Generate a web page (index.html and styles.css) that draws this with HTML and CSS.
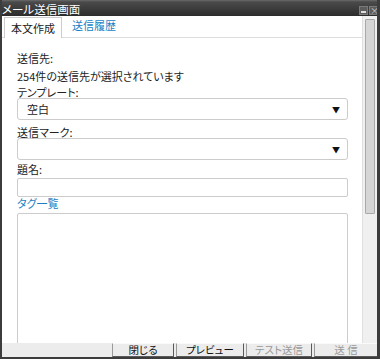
FILE: index.html
```html
<!DOCTYPE html>
<html lang="ja">
<head>
  <meta charset="UTF-8" />
  <title>メール送信画面</title>
  <link rel="stylesheet" href="styles.css">
</head>
<body>
  <div class="window">
    <div class="titlebar">
      <span class="title">メール送信画面</span>
      <div class="winbtns">
        <span class="wbtn wmin"></span>
        <span class="wbtn wclose">×</span>
      </div>
    </div>

    <div class="main">
      <div class="pane">
        <div class="tabs">
          <div class="tab active">本文作成</div>
          <div class="tab link">送信履歴</div>
        </div>

        <div class="form">
          <div class="label first">送信先:</div>
          <div class="label gap6">254件の送信先が選択されています</div>
          <div class="label gap4">テンプレート:</div>
          <div class="select">空白<span class="arrow">▼</span></div>
          <div class="label gap6">送信マーク:</div>
          <div class="select"><span class="arrow">▼</span></div>
          <div class="label gap3">題名:</div>
          <div class="input"></div>
          <div class="label taglink">タグ一覧</div>
          <div class="textarea"></div>
        </div>
      </div>
      <div class="scrollbar"><div class="thumb"></div></div>
    </div>

    <div class="footer">
      <div class="fbtn">閉じる</div>
      <div class="fbtn">プレビュー</div>
      <div class="fbtn off">テスト送信</div>
      <div class="fbtn off">送 信</div>
    </div>
  </div>
</body>
</html>
```

FILE: styles.css
```css
* { box-sizing: border-box; }

html, body {
  margin: 0;
  padding: 0;
  background: #fff;
}

body {
  font-family: "Noto Sans CJK JP", "Noto Sans", sans-serif;
  font-size: 11px;
  font-feature-settings: "palt";
  color: #222;
}

.window {
  width: 380px;
  height: 359px;
  display: flex;
  flex-direction: column;
  border-left: 2px solid #3c3c3c;
  border-right: 3px solid #3c3c3c;
  border-bottom: 2px solid #3c3c3c;
  overflow: hidden;
}

.titlebar {
  height: 16px;
  margin: 0 -3px 0 -2px;
  display: flex;
  align-items: center;
  justify-content: space-between;
  background: linear-gradient(#6a6a6a 0, #4a4a4a 2px, #2c2c2c 100%);
  color: #fff;
  padding: 0 2px;
}

.title {
  font-size: 11.5px;
  line-height: 14px;
  margin-top: 1px;
}

.winbtns {
  display: flex;
  gap: 1px;
  align-self: flex-end;
  margin-bottom: 1px;
}

.wbtn {
  width: 9px;
  height: 9px;
  background: #5c5c5c;
  border: 1px solid #7a7a7a;
  position: relative;
  color: #ccc;
  font-size: 9px;
  line-height: 7px;
  text-align: center;
}

.wmin::after {
  content: "";
  position: absolute;
  left: 1px;
  right: 1px;
  bottom: 1px;
  height: 2px;
  background: #ddd;
}

.main {
  flex: 1;
  display: flex;
  min-height: 0;
}

.pane {
  flex: 1;
  overflow: hidden;
}

.tabs {
  height: 22px;
  display: flex;
  align-items: flex-end;
  border-bottom: 1px solid #ddd;
  padding-left: 2px;
}

.tab {
  height: 21px;
  line-height: 19px;
  padding: 0 10px;
}

.tab.active {
  width: 58px;
  padding: 0;
  text-align: center;
  border: 1px solid #ccc;
  border-bottom: none;
  background: #fff;
  margin-bottom: -1px;
  height: 21px;
  line-height: 20px;
}

.link, .taglink { color: #1a7fc4; }

.form {
  padding: 0 14px 0 15px;
}

.label {
  line-height: 12px;
  height: 12px;
}

.first { margin-top: 14px; }
.gap6 { margin-top: 6px; }
.gap4 { margin-top: 4px; }
.gap3 { margin-top: 3px; }

.select {
  height: 22px;
  border: 1px solid #ccc;
  border-radius: 3px;
  display: flex;
  align-items: center;
  justify-content: space-between;
  padding: 0 7px 0 9px;
}

.arrow {
  margin-left: auto;
  font-size: 8px;
  color: #111;
}

.input {
  height: 19px;
  margin-top: 3px;
  border: 1px solid #ccc;
  border-radius: 2px;
}

.textarea {
  height: 140px;
  margin-top: 4px;
  border: 1px solid #ccc;
  border-radius: 2px;
}

.scrollbar {
  width: 15px;
  background: #f0f0f0;
  border-left: 1px solid #e0e0e0;
  padding: 3px 2px 0 2px;
}

.thumb {
  height: 195px;
  background: #d6d6d6;
  border: 1px solid #a9a9a9;
  border-radius: 1px;
}

.footer {
  height: 14px;
  flex-shrink: 0;
  background: #ececec;
  display: flex;
  justify-content: flex-end;
  gap: 2px;
}

.fbtn {
  height: 14px;
  text-align: center;
  font-size: 10.5px;
  line-height: 11px;
  background: #ececec;
  color: #111;
  border: 1px solid;
  border-color: #fafafa #5a5a5a #5a5a5a #9a9a9a;
}

.fbtn:nth-child(1) { width: 62px; }
.fbtn:nth-child(2) { width: 68px; }
.fbtn:nth-child(3) { width: 66px; }
.fbtn:nth-child(4) { width: 63px; border-right: none; }

.fbtn.off { color: #999; }
```
